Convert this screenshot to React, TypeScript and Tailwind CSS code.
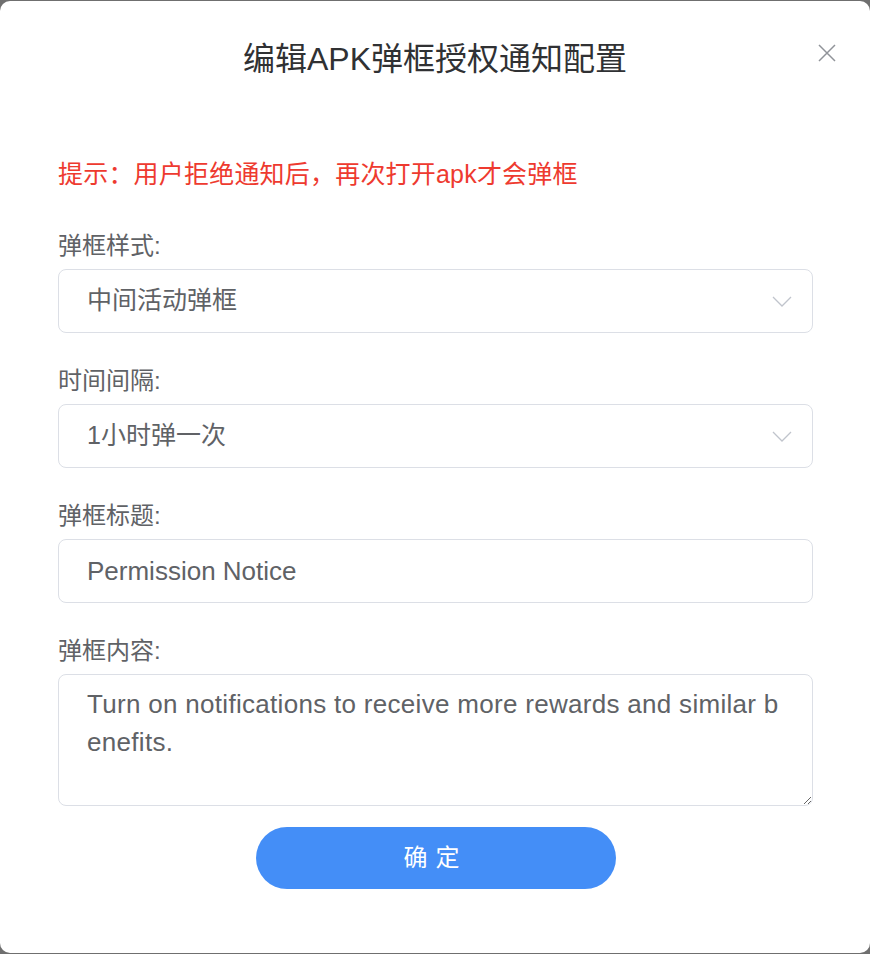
const FONT = "font-['Liberation_Sans','Noto_Sans_CJK_SC',sans-serif]";

function Chevron() {
  return (
    <svg width="20" height="11" viewBox="0 0 20 11" fill="none" className="shrink-0">
      <polyline points="1,1 10,10 19,1" stroke="#c0c4cc" strokeWidth="1.3" />
    </svg>
  );
}

function SelectBox({ value }: { value: string }) {
  return (
    <div className="flex h-[64px] items-center justify-between rounded-[8px] border border-[#dcdfe6] bg-white pl-[28px] pr-[20px]">
      <span className="text-[25px] text-[#606266]">{value}</span>
      <Chevron />
    </div>
  );
}

function Field({ label, children }: { label: string; children: React.ReactNode }) {
  return (
    <div className="flex flex-col">
      <label className="mb-[7px] text-[24px] leading-[32px] text-[#606266]">{label}</label>
      {children}
    </div>
  );
}

export default function App() {
  return (
    <div className={`h-screen bg-[#6f6f6f] pt-px ${FONT}`}>
      <div className="relative h-[952px] w-full rounded-[10px] bg-white">
        <div className="pt-[34px] text-center">
          <h1 className="text-[32px] leading-[48px] text-[#303133]">编辑APK弹框授权通知配置</h1>
        </div>
        <button className="absolute right-[34px] top-[43px] h-[18px] w-[18px]">
          <svg width="18" height="18" viewBox="0 0 18 18">
            <path d="M1 1 L17 17 M17 1 L1 17" stroke="#909399" strokeWidth="1.5" />
          </svg>
        </button>

        <div className="pl-[58px] pr-[57px]">
          <p className="mt-[73px] text-[25px] leading-[36px] tracking-[0.2px] text-[#ee3a2f]">
            提示：用户拒绝通知后，再次打开apk才会弹框
          </p>

          <div className="mt-[38px] flex flex-col gap-[32px]">
            <Field label="弹框样式:">
              <SelectBox value="中间活动弹框" />
            </Field>
            <Field label="时间间隔:">
              <SelectBox value="1小时弹一次" />
            </Field>
            <Field label="弹框标题:">
              <input
                readOnly
                value="Permission Notice"
                className="h-[64px] rounded-[8px] border border-[#dcdfe6] bg-white px-[28px] text-[26px] text-[#606266] outline-none"
              />
            </Field>
            <Field label="弹框内容:">
              <textarea
                readOnly
                value="Turn on notifications to receive more rewards and similar benefits."
                className="h-[132px] resize-y break-all rounded-[8px] border border-[#dcdfe6] bg-white px-[28px] py-[10px] text-[26px] leading-[38px] tracking-[0.3px] text-[#606266] outline-none"
              />
            </Field>
          </div>

          <div className="mt-[21px] flex justify-center">
            <button className="h-[62px] w-[360px] rounded-full bg-[#448ef7] text-[24px] tracking-[8px] text-white">
              确定
            </button>
          </div>
        </div>
      </div>
    </div>
  );
}
